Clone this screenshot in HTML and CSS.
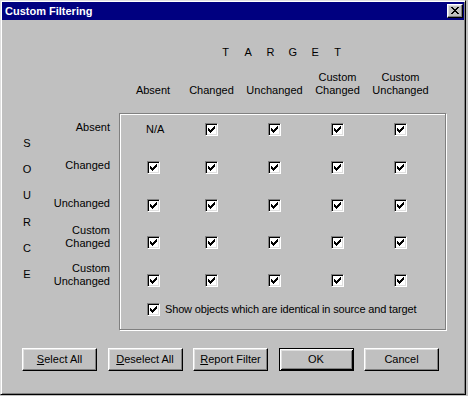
FILE: index.html
```html
<!DOCTYPE html>
<html>
<head>
<meta charset="utf-8">
<title>Custom Filtering</title>
<link rel="stylesheet" href="styles.css">
</head>
<body>
<svg class="defs" width="0" height="0" aria-hidden="true">
  <defs>
    <symbol id="chk" viewBox="0 0 7 7"><path d="M0 2h1v3H0zM1 3h1v3H1zM2 4h1v3H2zM3 3h1v3H3zM4 2h1v3H4zM5 1h1v3H5zM6 0h1v3H6z"/></symbol>
  </defs>
</svg>
<div class="window">
  <div class="titlebar">
    <span class="title">Custom Filtering</span>
    <span class="close"><svg width="8" height="7" viewBox="0 0 8 7" shape-rendering="crispEdges"><path d="M0 0h2v1H0zM6 0h2v1H6zM1 1h2v1H1zM5 1h2v1H5zM2 2h4v1H2zM3 3h2v1H3zM2 4h4v1H2zM1 5h2v1H1zM5 5h2v1H5zM0 6h2v1H0zM6 6h2v1H6z"/></svg></span>
  </div>
  <div class="client">
    <div class="target"><span>T</span><span>A</span><span>R</span><span>G</span><span>E</span><span>T</span></div>
    <div class="headers cols">
      <div>Absent</div>
      <div>Changed</div>
      <div>Unchanged</div>
      <div>Custom<br>Changed</div>
      <div>Custom<br>Unchanged</div>
    </div>
    <div class="matrix">
      <div class="source"><span>S</span><span>O</span><span>U</span><span>R</span><span>C</span><span>E</span></div>
      <div class="labels">
        <div class="l1">Absent</div>
        <div class="l1">Changed</div>
        <div class="l1">Unchanged</div>
        <div class="l2">Custom<br>Changed</div>
        <div class="l2">Custom<br>Unchanged</div>
      </div>
      <div class="group">
        <div class="grid cols">
          <span class="na">N/A</span>
          <span class="cb"><svg><use href="#chk"/></svg></span>
          <span class="cb"><svg><use href="#chk"/></svg></span>
          <span class="cb"><svg><use href="#chk"/></svg></span>
          <span class="cb"><svg><use href="#chk"/></svg></span>

          <span class="cb first"><svg><use href="#chk"/></svg></span>
          <span class="cb"><svg><use href="#chk"/></svg></span>
          <span class="cb"><svg><use href="#chk"/></svg></span>
          <span class="cb"><svg><use href="#chk"/></svg></span>
          <span class="cb"><svg><use href="#chk"/></svg></span>

          <span class="cb first"><svg><use href="#chk"/></svg></span>
          <span class="cb"><svg><use href="#chk"/></svg></span>
          <span class="cb"><svg><use href="#chk"/></svg></span>
          <span class="cb"><svg><use href="#chk"/></svg></span>
          <span class="cb"><svg><use href="#chk"/></svg></span>

          <span class="cb first"><svg><use href="#chk"/></svg></span>
          <span class="cb"><svg><use href="#chk"/></svg></span>
          <span class="cb"><svg><use href="#chk"/></svg></span>
          <span class="cb"><svg><use href="#chk"/></svg></span>
          <span class="cb"><svg><use href="#chk"/></svg></span>

          <span class="cb first"><svg><use href="#chk"/></svg></span>
          <span class="cb"><svg><use href="#chk"/></svg></span>
          <span class="cb"><svg><use href="#chk"/></svg></span>
          <span class="cb"><svg><use href="#chk"/></svg></span>
          <span class="cb"><svg><use href="#chk"/></svg></span>

          <div class="show"><span class="cb"><svg><use href="#chk"/></svg></span><span class="show-text">Show objects which are identical in source and target</span></div>
        </div>
      </div>
    </div>
    <div class="buttons">
      <button class="btn"><u>S</u>elect All</button>
      <button class="btn"><u>D</u>eselect All</button>
      <button class="btn"><u>R</u>eport Filter</button>
      <button class="btn default">OK</button>
      <button class="btn">Cancel</button>
    </div>
  </div>
</div>
</body>
</html>
```

FILE: styles.css
```css
* { box-sizing: border-box; }
html, body { margin: 0; padding: 0; }
body {
  width: 468px;
  height: 396px;
  overflow: hidden;
  background: #c0c0c0;
  font-family: "Liberation Sans", Arial, sans-serif;
  font-size: 11px;
  color: #000;
}
.defs { position: absolute; width: 0; height: 0; overflow: hidden; }

.window {
  width: 466px;
  height: 395px;
  background: #c0c0c0;
  border: 1px solid;
  border-color: #dfdfdf #000 #000 #dfdfdf;
  box-shadow: inset 1px 1px #fff, inset -1px -1px #808080;
  padding: 1px;
}

.titlebar {
  height: 18px;
  background: #000080;
  display: flex;
  align-items: center;
  justify-content: space-between;
  padding: 0 1px 0 3px;
}
.title {
  color: #fff;
  font-weight: bold;
  font-size: 11px;
  line-height: 18px;
}
.close {
  width: 16px;
  height: 14px;
  background: #c0c0c0;
  border: 1px solid;
  border-color: #fff #000 #000 #fff;
  box-shadow: inset -1px -1px #808080, inset 1px 1px #dfdfdf;
  padding: 2px 0 0 3px;
}
.close svg { display: block; fill: #000; }

.client { padding-top: 26px; }

.target {
  display: flex;
  margin-left: 212.5px;
  line-height: 13px;
}
.target span { width: 22.4px; text-align: center; }

.cols {
  display: grid;
  grid-template-columns: 54px repeat(4, 63px);
}

.headers {
  margin-top: 12px;
  margin-left: 124px;
  height: 26px;
  align-items: end;
  text-align: center;
  line-height: 13px;
  white-space: nowrap;
}

.matrix {
  margin-top: 16px;
  display: flex;
  align-items: flex-start;
}
.source {
  width: 50px;
  padding-top: 17px;
  display: flex;
  flex-direction: column;
}
.source span {
  height: 26.2px;
  line-height: 26.2px;
  text-align: center;
}
.labels {
  width: 58px;
  padding-top: 10px;
  display: grid;
  grid-template-rows: repeat(5, 37.75px);
  align-items: start;
  text-align: right;
  line-height: 13px;
  white-space: nowrap;
}
.labels .l1 { margin-top: -2px; }
.labels .l2 { margin-top: -12px; }

.group {
  margin-left: 9px;
  width: 327px;
  height: 217px;
  border: 1px solid #808080;
  box-shadow: inset 1px 1px #fff, 1px 1px #fff;
  padding: 9px 13px 0 6px;
}
.grid {
  grid-template-rows: repeat(4, 37.75px) 29px 13px;
  align-items: start;
  justify-items: center;
  line-height: 13px;
}
.grid .first { justify-self: start; margin-left: 21px; }
.grid .na { justify-self: start; margin-left: 20px; }

.cb {
  display: block;
  width: 13px;
  height: 13px;
  background: #fff;
  border: 1px solid;
  border-color: #808080 #fff #fff #808080;
  box-shadow: inset 1px 1px #000, inset -1px -1px #dfdfdf;
  padding: 2px;
}
.cb svg { display: block; width: 7px; height: 7px; fill: #000; shape-rendering: crispEdges; }

.show {
  grid-column: 1 / -1;
  justify-self: start;
  margin-left: 21px;
  display: flex;
  align-items: center;
  gap: 5px;
  white-space: nowrap;
}
.show-text { letter-spacing: -0.15px; }

.buttons {
  margin-top: 18px;
  margin-left: 20px;
  display: flex;
  gap: 10.5px;
}
.btn {
  width: 75px;
  height: 23px;
  padding: 0;
  margin: 0;
  font: inherit;
  color: #000;
  background: #c0c0c0;
  border: 1px solid;
  border-color: #fff #000 #000 #fff;
  box-shadow: inset -1px -1px #808080, inset 1px 1px #dfdfdf;
  line-height: 21px;
  text-align: center;
}
.btn u { text-decoration: underline; }
.btn.default {
  border-color: #000;
  box-shadow: inset 1px 1px #fff, inset -1px -1px #000, inset 2px 2px #dfdfdf, inset -2px -2px #808080;
}
```
